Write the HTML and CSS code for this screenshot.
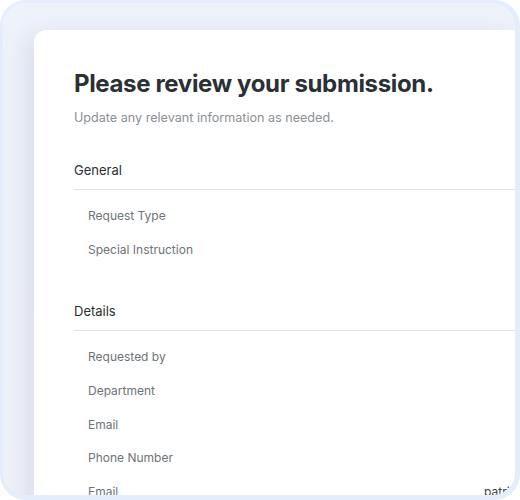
FILE: index.html
```html
<!DOCTYPE html>
<html>
<head>
<meta charset="utf-8">
<link rel="stylesheet" href="styles.css">
</head>
<body>
<div class="frame">
  <div class="panel">
    <div class="card">
      <h1 class="title">Please review your submission.</h1>
      <p class="subtitle">Update any relevant information as needed.</p>
      <section class="section">
        <div class="section-head">General</div>
        <div class="row"><span class="label">Request Type</span><span class="value"></span></div>
        <div class="row"><span class="label">Special Instruction</span><span class="value"></span></div>
      </section>
      <section class="section">
        <div class="section-head">Details</div>
        <div class="row"><span class="label">Requested by</span><span class="value"></span></div>
        <div class="row"><span class="label">Department</span><span class="value"></span></div>
        <div class="row"><span class="label">Email</span><span class="value"></span></div>
        <div class="row"><span class="label">Phone Number</span><span class="value"></span></div>
        <div class="row"><span class="label">Email</span><span class="value">patricia.wells@company.com</span></div>
      </section>
    </div>
  </div>
</div>
</body>
</html>
```
FILE: styles.css
```css
html, body {
  margin: 0;
  padding: 0;
  background: #ffffff;
}
body {
  width: 520px;
  height: 500px;
  overflow: hidden;
  font-family: Inter, "Noto Sans", sans-serif;
}
.frame {
  width: 520px;
  height: 500px;
  box-sizing: border-box;
  padding: 3px 5px 5px 3px;
  background: #e4edfc;
  border-radius: 26px;
}
.panel {
  width: 100%;
  height: 100%;
  border-radius: 22px;
  overflow: hidden;
  background: linear-gradient(180deg, #eef2fb 0%, #eff2f9 100%);
  padding: 27px 0 0 31px;
  box-sizing: border-box;
}
.card {
  background: #ffffff;
  border-radius: 12px 0 0 0;
  height: 600px;
  padding: 38px 0 0 40px;
  box-sizing: border-box;
  box-shadow: -8px 4px 22px rgba(150, 160, 185, 0.22);
}
.title {
  margin: 0;
  font-size: 24px;
  line-height: 32px;
  font-weight: 700;
  color: #2a3035;
  letter-spacing: -0.35px;
}
.subtitle {
  margin: 9px 0 0 0;
  font-size: 12.6px;
  line-height: 18px;
  color: #8b9096;
}
.section {
  margin-top: 34px;
}
.section + .section {
  margin-top: 35px;
}
.section-head {
  font-size: 13px;
  line-height: 18px;
  color: #2b2f33;
  font-weight: 400;
  padding-bottom: 10px;
  border-bottom: 1px solid #e1e3e6;
  margin-bottom: 9px;
}
.row {
  display: grid;
  grid-template-columns: 396px 1fr;
  height: 33.8px;
  align-items: center;
  font-size: 12px;
  color: #6e7378;
  padding-left: 14px;
}
.value {
  color: #3a3f44;
  white-space: nowrap;
}
```
